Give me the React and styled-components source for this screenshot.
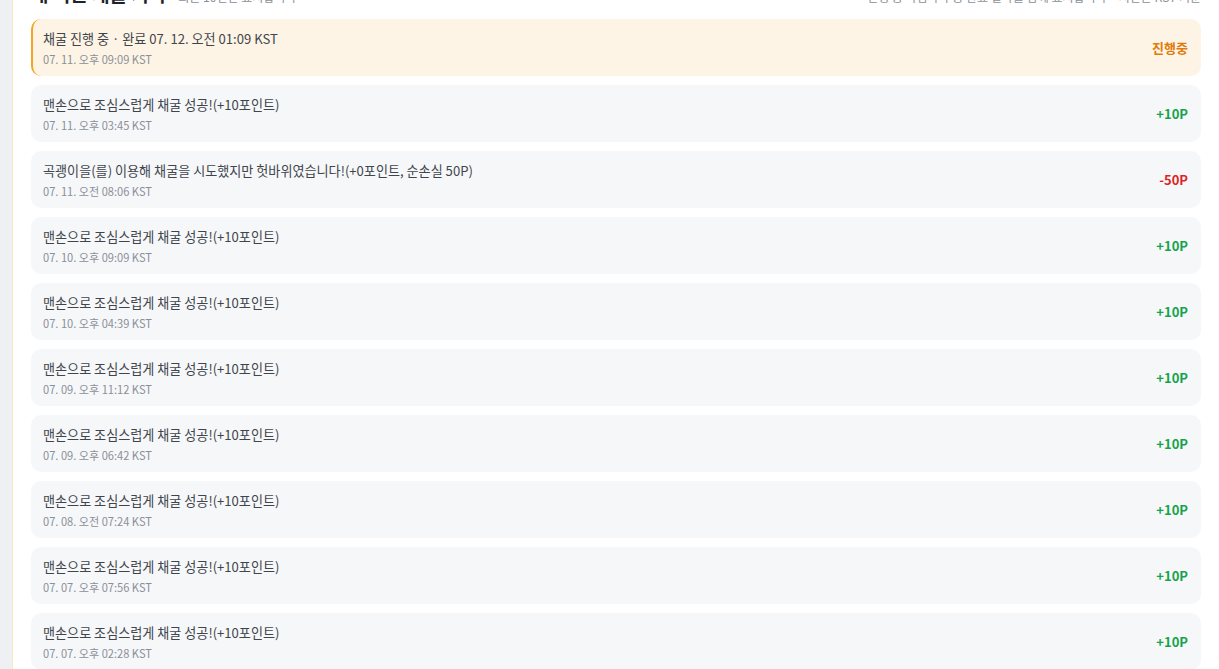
import styled, { createGlobalStyle } from "styled-components";

const GlobalStyle = createGlobalStyle`
  html, body {
    margin: 0;
    padding: 0;
    background: #ffffff;
    font-family: "Noto Sans CJK KR", "Noto Sans", sans-serif;
    overflow: hidden;
  }
`;

const records = [
  { text: "채굴 진행 중 · 완료 07. 12. 오전 01:09 KST", time: "07. 11. 오후 09:09 KST", value: "진행중", kind: "pending" },
  { text: "맨손으로 조심스럽게 채굴 성공!(+10포인트)", time: "07. 11. 오후 03:45 KST", value: "+10P", kind: "gain" },
  { text: "곡괭이을(를) 이용해 채굴을 시도했지만 헛바위였습니다!(+0포인트, 순손실 50P)", time: "07. 11. 오전 08:06 KST", value: "-50P", kind: "loss" },
  { text: "맨손으로 조심스럽게 채굴 성공!(+10포인트)", time: "07. 10. 오후 09:09 KST", value: "+10P", kind: "gain" },
  { text: "맨손으로 조심스럽게 채굴 성공!(+10포인트)", time: "07. 10. 오후 04:39 KST", value: "+10P", kind: "gain" },
  { text: "맨손으로 조심스럽게 채굴 성공!(+10포인트)", time: "07. 09. 오후 11:12 KST", value: "+10P", kind: "gain" },
  { text: "맨손으로 조심스럽게 채굴 성공!(+10포인트)", time: "07. 09. 오후 06:42 KST", value: "+10P", kind: "gain" },
  { text: "맨손으로 조심스럽게 채굴 성공!(+10포인트)", time: "07. 08. 오전 07:24 KST", value: "+10P", kind: "gain" },
  { text: "맨손으로 조심스럽게 채굴 성공!(+10포인트)", time: "07. 07. 오후 07:56 KST", value: "+10P", kind: "gain" },
  { text: "맨손으로 조심스럽게 채굴 성공!(+10포인트)", time: "07. 07. 오후 02:28 KST", value: "+10P", kind: "gain" },
];

const valueColors = {
  pending: "#e07b0c",
  gain: "#16a34a",
  loss: "#dc2626",
};

const Page = styled.div`
  display: flex;
  min-height: 100vh;
  background: #eef0f3;
`;

const SideGap = styled.div`
  width: 12px;
  flex-shrink: 0;
`;

const Panel = styled.section`
  flex: 1;
  background: #ffffff;
  border-left: 1px solid #fbe6bd;
  padding: 0 18px;
  margin-top: -17px;
`;

const Header = styled.div`
  display: flex;
  align-items: baseline;
  justify-content: space-between;
  height: 22px;
  margin-bottom: 14px;
`;

const TitleGroup = styled.div`
  display: flex;
  align-items: baseline;
  gap: 12px;
`;

const Title = styled.h2`
  margin: 0;
  font-size: 19px;
  font-weight: 700;
  color: #1f2329;
  line-height: 22px;
`;

const Sub = styled.span`
  font-size: 12px;
  color: #8a9099;
`;

const Note = styled.span`
  font-size: 12px;
  color: #8a9099;
`;

const List = styled.div`
  display: flex;
  flex-direction: column;
  gap: 9px;
`;

const Card = styled.div`
  display: flex;
  align-items: center;
  justify-content: space-between;
  height: 57px;
  box-sizing: border-box;
  padding: 0 13px 0 ${(p) => (p.$pending ? "10px" : "12px")};
  border-radius: 10px;
  background: ${(p) => (p.$pending ? "#fef4e5" : "#f6f7f9")};
  border-left: ${(p) => (p.$pending ? "2px solid #f5a524" : "none")};
`;

const Info = styled.div`
  display: flex;
  flex-direction: column;
  gap: 4px;
`;

const Text = styled.div`
  font-size: 13.1px;
  color: #40454c;
  line-height: 18px;
`;

const Time = styled.div`
  font-size: 11.1px;
  color: #8a9099;
  line-height: 14px;
`;

const Value = styled.div`
  font-size: 13px;
  font-weight: 700;
  color: ${(p) => valueColors[p.$kind]};
`;

export default function App() {
  return (
    <>
      <GlobalStyle />
      <Page>
        <SideGap />
        <Panel>
          <Header>
            <TitleGroup>
              <Title>내 최근 채굴 기록</Title>
              <Sub>최근 10건만 표시합니다</Sub>
            </TitleGroup>
            <Note>진행 중 작업과 수동 완료 결과를 함께 표시합니다 · 시간은 KST 기준</Note>
          </Header>
          <List>
            {records.map((r, i) => (
              <Card key={i} $pending={r.kind === "pending"}>
                <Info>
                  <Text>{r.text}</Text>
                  <Time>{r.time}</Time>
                </Info>
                <Value $kind={r.kind}>{r.value}</Value>
              </Card>
            ))}
          </List>
        </Panel>
      </Page>
    </>
  );
}
